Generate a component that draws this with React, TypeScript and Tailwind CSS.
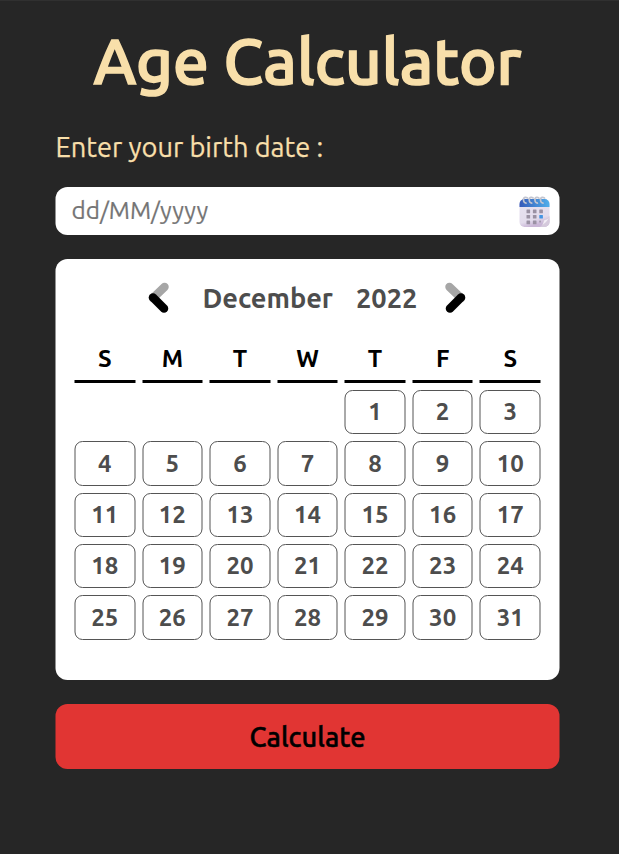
const weekdays = ["S", "M", "T", "W", "T", "F", "S"];
const days = Array.from({ length: 31 }, (_, i) => i + 1);

function CalendarIcon() {
  return (
    <svg width="32" height="32" viewBox="0 0 32 32" className="mt-[2px]" aria-hidden="true">
      <defs>
        <linearGradient id="header" x1="0" x2="1">
          <stop offset="0" stopColor="#3659b8" />
          <stop offset="1" stopColor="#50afeb" />
        </linearGradient>
        <linearGradient id="page" x1="0" y1="0" x2="0.3" y2="1">
          <stop offset="0" stopColor="#e9e4f2" />
          <stop offset="0.8" stopColor="#e3dcec" />
          <stop offset="1" stopColor="#c9b6d6" />
        </linearGradient>
      </defs>
      <rect x="1" y="3" width="30" height="28" rx="5" fill="url(#page)" />
      <path d="M1 11V8a5 5 0 0 1 5-5h20a5 5 0 0 1 5 5v3z" fill="url(#header)" />
      <path d="M21 31c4-1 3-5 4-7 2-1 4-1 6-4v6a5 5 0 0 1-5 5z" fill="#d5cadc" />
      <path d="M22 30c3-1 3-4 4-6 2 0 4-1 5-3-2 4-5 7-9 9z" fill="#f2edf5" />
      {[5, 10.7, 16.4, 22].map((x) => (
        <path key={x} d={`M${x + 4.5} 2.7c-1-2-4.5-2-4.5.9 0 2.2 1 3.8 3.2 3.4`} fill="none" stroke="#c3c5d0" strokeWidth="1.7" />
      ))}
      {[13.6, 19, 24.6].map((y, row) =>
        [8, 14.4, 20.8].map((x, col) => (
          <rect
            key={`${x}-${y}`}
            x={x}
            y={y}
            width={row === 2 && col === 2 ? 1.5 : 3.6}
            height={row === 2 && col === 2 ? 1.8 : 3.6}
            rx="0.5"
            fill={row === 1 && col === 2 ? "#4494e2" : "#9a91a3"}
          />
        ))
      )}
    </svg>
  );
}

function Chevron({ next = false }: { next?: boolean }) {
  return (
    <svg width="22" height="32" viewBox="0 0 22 32" className={next ? "-scale-x-100" : ""} aria-hidden="true">
      <path d="M5.5 16 17 5" stroke="#a6a6a6" strokeWidth="8.5" strokeLinecap="round" />
      <path d="M5.5 15.5 16.5 26.5" stroke="#000" strokeWidth="8.5" strokeLinecap="round" />
    </svg>
  );
}

export default function App() {
  return (
    <main className="h-[854px] w-[619px] border-t border-[#303030] bg-[#262626] pl-[55px] font-['Ubuntu','Noto_Sans',sans-serif]">
      <div className="flex w-[504px] translate-x-[0.5px] flex-col">
        <h1 className="mt-[19px] h-[84px] text-center text-[63.6px] leading-[82px] font-medium whitespace-nowrap text-[#f8dfaa] [-webkit-text-stroke:1.7px_#f8dfaa]">
          Age Calculator
        </h1>
        <label htmlFor="birth" className="mt-[23px] h-10 text-[27.2px] leading-10 text-[#f8dfaa] [-webkit-text-stroke:0.25px_#f8dfaa]">
          Enter your birth date :
        </label>
        <div className="mt-[20px] flex h-12 items-center justify-between rounded-xl bg-white pr-[9.5px] pl-4">
          <input
            id="birth"
            placeholder="dd/MM/yyyy"
            className="mb-[2px] h-10 w-80 text-[24.3px] outline-none placeholder:text-[#757575] [-webkit-text-stroke:0.2px_#757575]"
          />
          <CalendarIcon />
        </div>
        <section className="mt-6 h-[421px] rounded-xl bg-white px-[19px] pt-[23px]">
          <div className="flex h-8 items-center text-[27.2px] leading-8 font-semibold text-[#4d4d4d]">
            <button className="ml-[73px]"><Chevron /></button>
            <span className="ml-[33px] w-[153.5px]">December</span>
            <span className="w-[88px]">2022</span>
            <button><Chevron next /></button>
          </div>
          <div className="mt-[27px] grid grid-cols-7 gap-[7px]">
            {weekdays.map((day, i) => (
              <div key={i} className="h-[42px] border-b-[3px] border-black text-center text-2xl leading-9 font-bold text-black">
                {day}
              </div>
            ))}
          </div>
          <div className="mt-[7px] grid auto-rows-[44.35px] grid-cols-7 gap-[7px]">
            {days.map((day) => (
              <button
                key={day}
                className={`rounded-lg border border-[#555] text-center text-2xl leading-[42px] font-semibold text-[#4d4d4d] ${day === 1 ? "col-start-5" : ""}`}
              >
                {day}
              </button>
            ))}
          </div>
        </section>
        <button className="mt-6 h-[65px] rounded-xl bg-[#e13533] pt-px text-center text-[27.2px] font-medium text-black [-webkit-text-stroke:0.5px_black]">
          Calculate
        </button>
      </div>
    </main>
  );
}
